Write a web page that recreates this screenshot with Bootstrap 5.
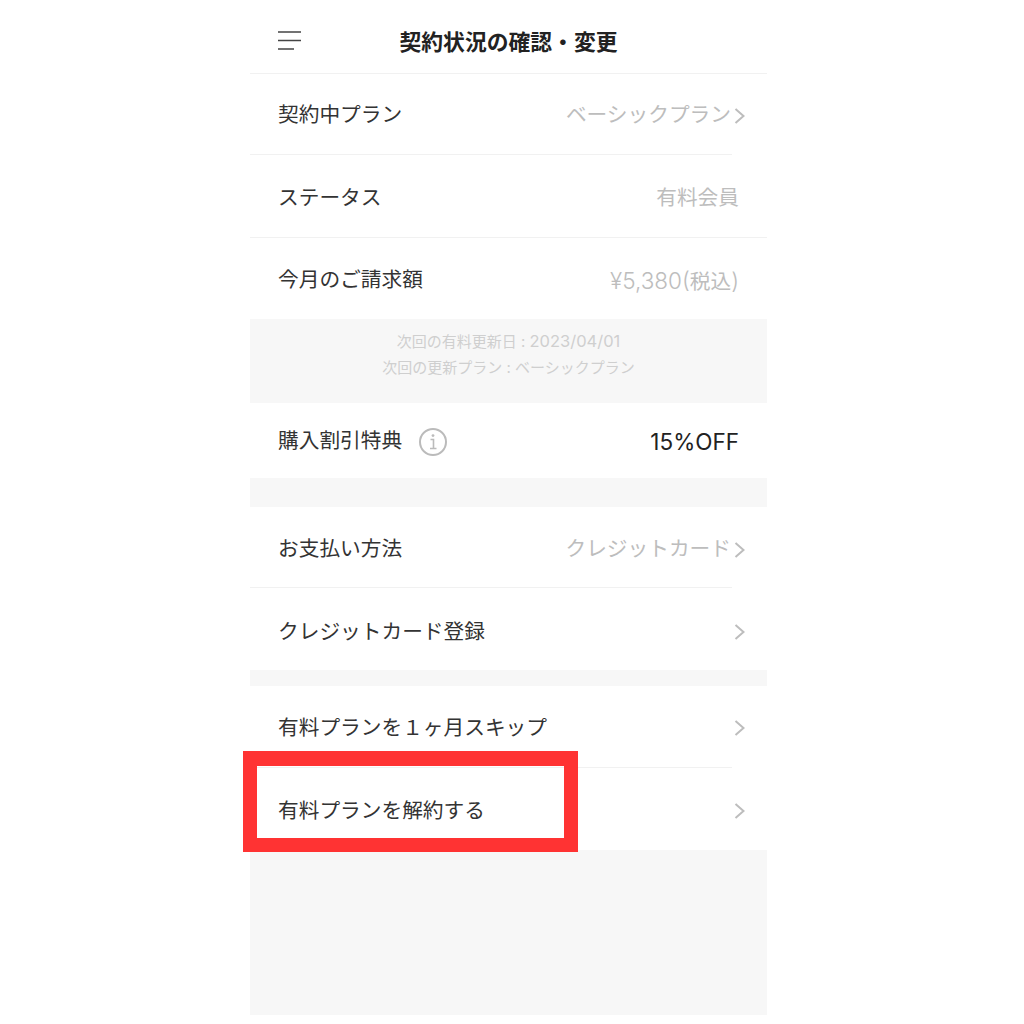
<!DOCTYPE html>
<html lang="ja">
<head>
<meta charset="utf-8">
<title>契約状況の確認・変更</title>
<link href="https://cdn.jsdelivr.net/npm/bootstrap@5.3.0/dist/css/bootstrap.min.css" rel="stylesheet">
<style>
html,body{background:#fff;height:1024px;overflow:hidden}
body{font-family:Inter,"Noto Sans CJK JP",sans-serif;color:#333;font-size:20.7px;line-height:1.3}
.phone{position:relative;width:517px;margin-left:250px;height:1015px;background:#f7f7f7;display:flex;flex-direction:column}
.topbar{height:74px;background:#fff;border-bottom:1px solid #f1f1f1;padding:0 28px;position:relative;display:flex;align-items:center;justify-content:center}
.topbar h1{font-size:21.8px;font-weight:700;color:#222;margin:12px 0 0 0;line-height:1.3;white-space:nowrap}
.burger{position:absolute;left:28px;top:31px}
.rowitem{background:#fff;display:flex;align-items:center;justify-content:space-between;padding:2px 28px 0;position:relative}
.rowitem.low{padding-top:4px}
.rowitem.lower{padding-top:6px}
.rowitem.sep::after{content:"";position:absolute;left:0;bottom:0;height:1px;width:482px;background:#f1f1f1}
.rowitem.full::after{width:100%}
.h83{height:83px}.h82{height:82px}.h81{height:81px}.h75{height:75px}
.val{color:#bdbdbd}
.val.strong{color:#222}
.bigger{font-size:22.5px;font-weight:300}
.strong .bigger{font-weight:400}
.latin{font-size:16.5px}
.valwrap{display:flex;align-items:center;margin-right:-6px}
.chev{display:block;margin-left:3px}
.info{display:block;margin-left:16px}
.notice{height:84px;color:#cfcfcf;font-size:15px;line-height:25.5px;text-align:center;padding-top:10px}
.gap29{height:29px}.gap16{height:16px}
.redbox{position:absolute;left:-7px;top:751px;width:335px;height:101px;border:14px solid #ff3333;border-top-width:15px;pointer-events:none}
</style>
</head>
<body>
<div class="phone">
  <div class="topbar">
    <svg class="burger" width="23" height="20" viewBox="0 0 23 20" fill="none" stroke="#444" stroke-width="1.3"><path d="M0 1h23M0 9.5h23M0 18h16"/></svg>
    <h1>契約状況の確認・変更</h1>
  </div>
  <div class="rowitem sep h81"><span>契約中プラン</span><span class="valwrap"><span class="val">ベーシックプラン</span><svg class="chev" width="11" height="16" viewBox="0 0 11 16" fill="none" stroke="#bdbdbd" stroke-width="2"><path d="M1.5 1l8 7-8 7"/></svg></span></div>
  <div class="rowitem sep full low h83"><span>ステータス</span><span class="val">有料会員</span></div>
  <div class="rowitem low h81"><span>今月のご請求額</span><span class="val"><span class="bigger">¥5,380(</span>税込<span class="bigger">)</span></span></div>
  <div class="notice"><div>次回の有料更新日 : <span class="latin">2023/04/01</span></div><div>次回の更新プラン : ベーシックプラン</div></div>
  <div class="rowitem h75"><span class="d-flex align-items-center"><span>購入割引特典</span><svg class="info" width="30" height="30" viewBox="0 0 30 30" fill="none"><circle cx="15" cy="15" r="13" stroke="#bbb" stroke-width="2"/><circle cx="15" cy="8.6" r="1.4" fill="#bbb"/><path d="M12.5 12.5h3v9M12 21.5h6.5" stroke="#bbb" stroke-width="1.6"/></svg></span><span class="val strong"><span class="bigger">15%OFF</span></span></div>
  <div class="gap29"></div>
  <div class="rowitem sep low h81"><span>お支払い方法</span><span class="valwrap"><span class="val">クレジットカード</span><svg class="chev" width="11" height="16" viewBox="0 0 11 16" fill="none" stroke="#bdbdbd" stroke-width="2"><path d="M1.5 1l8 7-8 7"/></svg></span></div>
  <div class="rowitem lower h82"><span>クレジットカード登録</span><svg class="chev valwrap" width="11" height="16" viewBox="0 0 11 16" fill="none" stroke="#bdbdbd" stroke-width="2"><path d="M1.5 1l8 7-8 7"/></svg></div>
  <div class="gap16"></div>
  <div class="rowitem sep h82"><span>有料プランを１ヶ月スキップ</span><svg class="chev valwrap" width="11" height="16" viewBox="0 0 11 16" fill="none" stroke="#bdbdbd" stroke-width="2"><path d="M1.5 1l8 7-8 7"/></svg></div>
  <div class="rowitem low h82"><span>有料プランを解約する</span><svg class="chev valwrap" width="11" height="16" viewBox="0 0 11 16" fill="none" stroke="#bdbdbd" stroke-width="2"><path d="M1.5 1l8 7-8 7"/></svg></div>
  <div class="redbox"></div>
</div>
<script src="https://cdn.jsdelivr.net/npm/bootstrap@5.3.0/dist/js/bootstrap.bundle.min.js"></script>
</body>
</html>
